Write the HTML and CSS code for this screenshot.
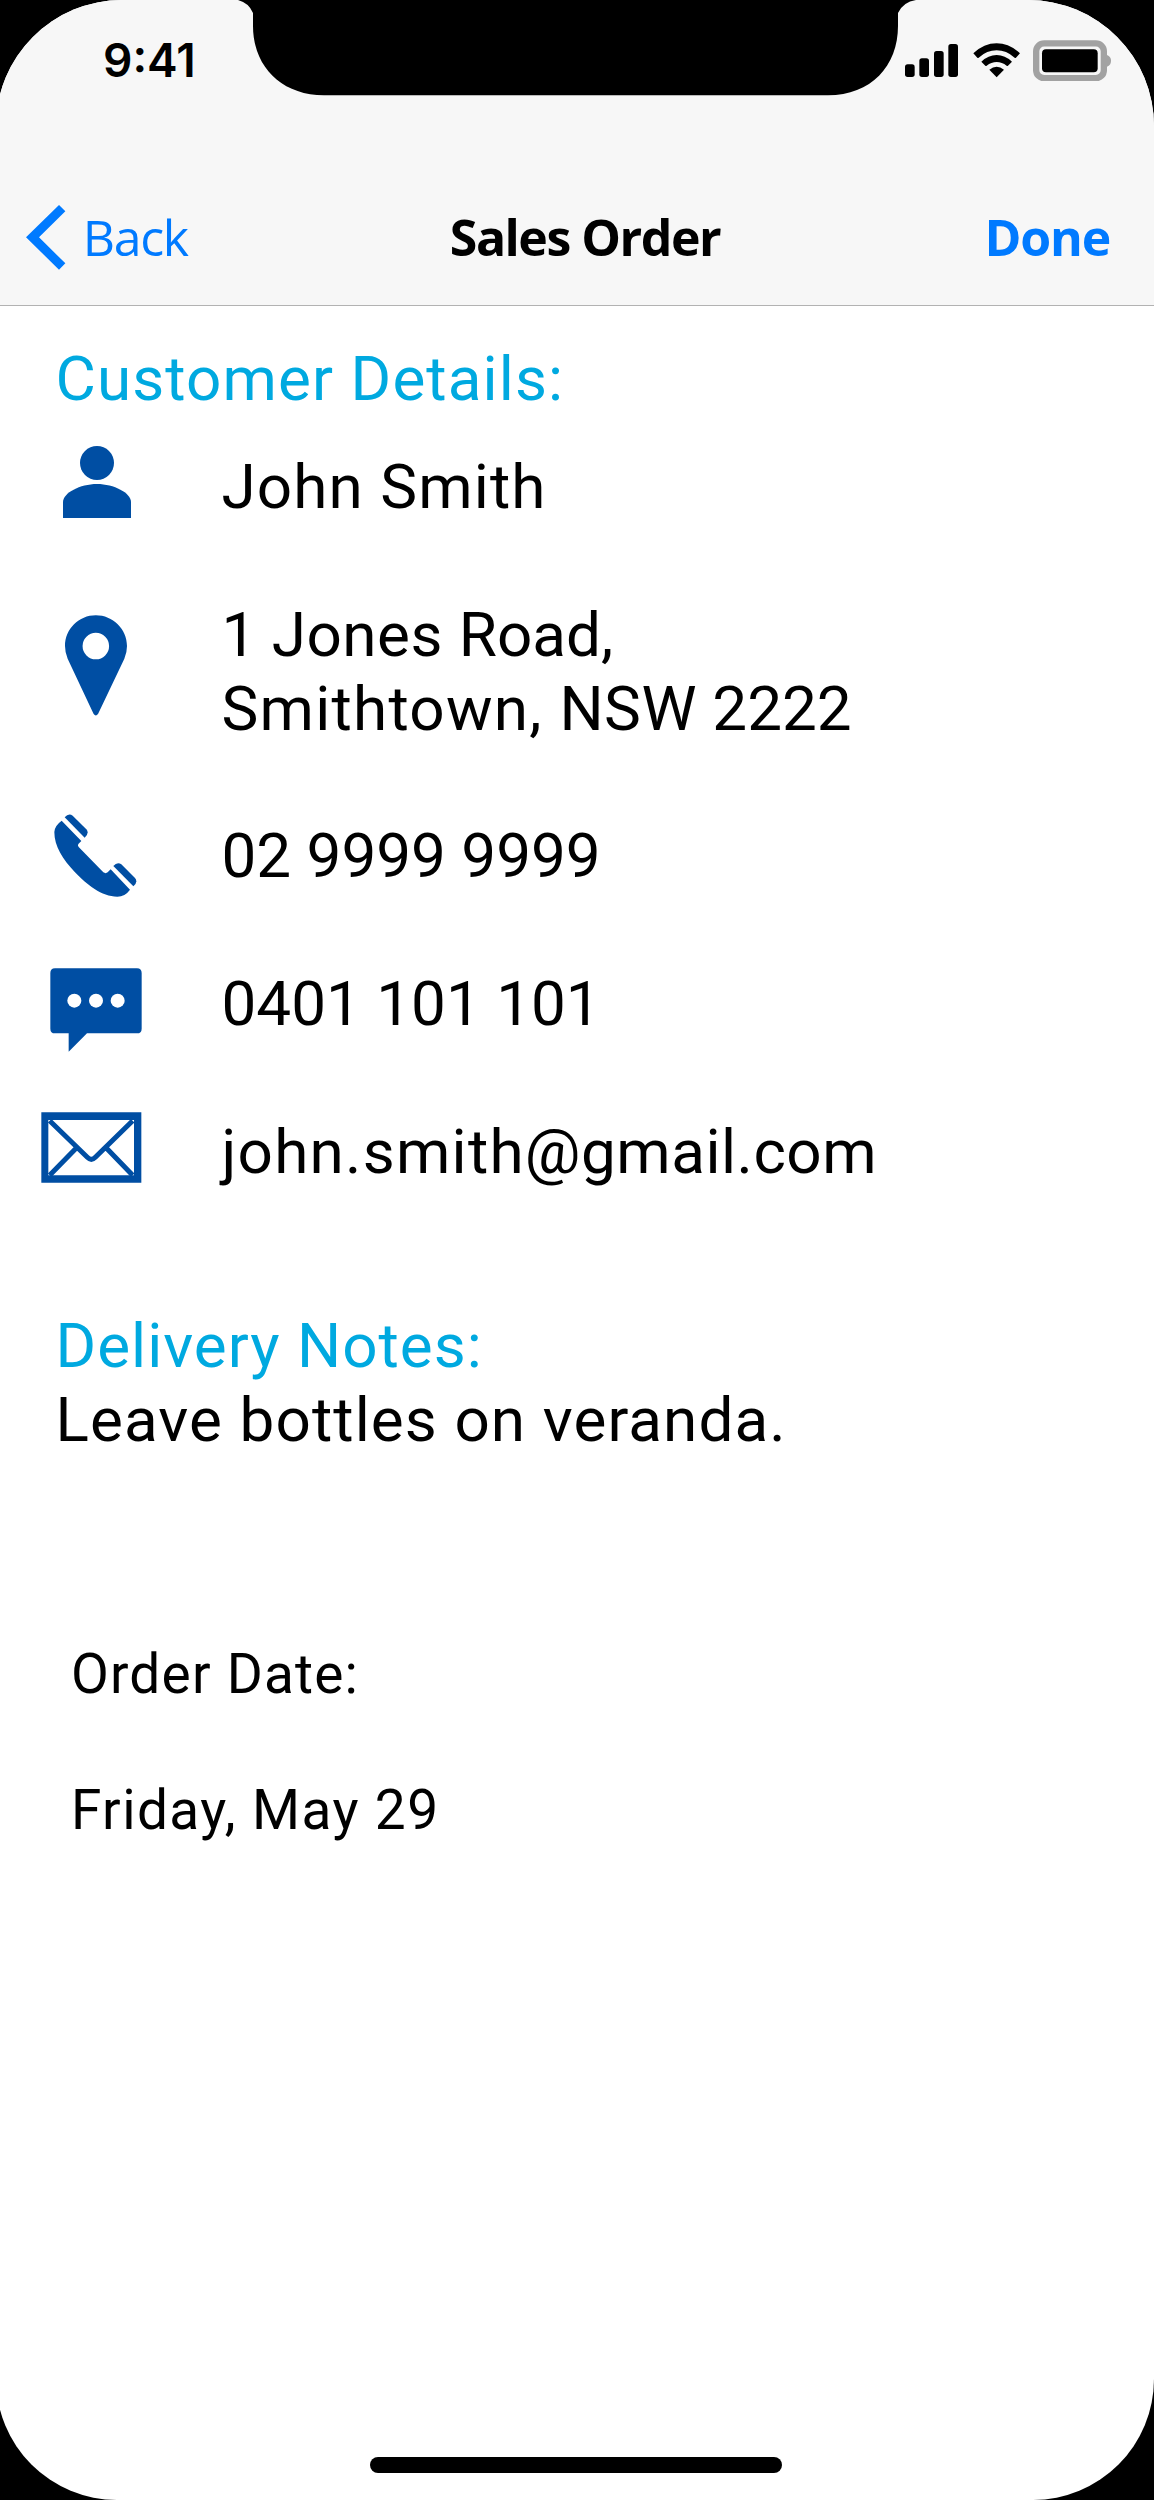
FILE: index.html
```html
<!DOCTYPE html>
<html lang="en">
<head>
<meta charset="utf-8">
<title>Sales Order</title>
<link rel="stylesheet" href="styles.css">
</head>
<body>
<div class="screen">
  <header class="header">
    <div class="status-bar">
      <span class="time">9:41</span>
      <div class="status-icons">
        <svg class="signal" viewBox="0 0 159 99" aria-hidden="true">
          <rect x="0" y="61" width="29" height="38" rx="8"/>
          <rect x="43" y="43" width="29" height="56" rx="8"/>
          <rect x="87" y="21" width="29" height="78" rx="8"/>
          <rect x="130" y="0" width="29" height="99" rx="8"/>
        </svg>
        <svg class="wifi" viewBox="657 128 142 104" aria-hidden="true">
          <path d="M658 159Q690 129 728 129Q766 129 798 159L786 172Q784 174 782 172Q757 150 728 150Q699 150 674 172Q672 174 670 172Z"/>
          <path d="M682 184Q703 164 728 164Q753 164 774 184L762 196Q760 198 758 196Q744 185 728 185Q712 185 698 196Q696 198 694 196Z"/>
          <path d="M706 208Q728 190 750 208L728 231Z"/>
        </svg>
        <svg class="battery" viewBox="836 119 236 125" aria-hidden="true">
          <rect x="845.5" y="129" width="203" height="104.500" rx="24" fill="none" stroke="#a2a2a2" stroke-width="19"/>
          <path d="M1058 164Q1070 169 1070 181Q1070 194 1058 199Z" fill="#a2a2a2"/>
          <rect x="863" y="147" width="167" height="69" rx="12"/>
        </svg>
      </div>
    </div>
    <nav class="nav-bar">
      <a class="back">
        <svg class="chevron" viewBox="80 614 119 195" aria-hidden="true"><path d="M179 614L198 633L119 711L198 789L179 808L80 711Z"/></svg>
        <span>Back</span>
      </a>
      <h1 class="title">Sales Order</h1>
      <a class="done">Done</a>
    </nav>
    <svg class="notch" viewBox="0 0 678 96" aria-hidden="true">
      <path d="M0 0Q11 3 15 13V26C15 66 43 95.300 86 95.300H590C633 95.300 660 66 660 26V13Q665 2 678 0Z" transform="translate(0 0)"/>
    </svg>
  </header>

  <main class="content">
    <section class="customer">
      <h2 class="heading wide">Customer Details:</h2>
      <ul class="details">
        <li class="detail">
          <span class="slot slot-person"><svg width="68" height="72" viewBox="0 0 68 72" aria-hidden="true"><circle cx="34" cy="17" r="17"/><path d="M0 72V56C0 47 17 38 34 38S68 47 68 56V72Z"/></svg></span>
          <span class="wide">John Smith</span>
        </li>
        <li class="detail">
          <span class="slot slot-pin"><svg width="62" height="101" viewBox="103 104 187 303" aria-hidden="true"><path fill-rule="evenodd" d="M196 104C247 104 290 145 290 197Q290 217 282 235L203 401Q196 411 189 401L111 235Q103 217 103 197C103 145 145 104 196 104ZM196 157A40 40 0 1 0 196 237A40 40 0 1 0 196 157Z"/></svg></span>
          <span>1 <span class="medium">Jones </span>Road,<br><span class="wider">Smithtown, </span><span class="medium">NSW</span> 2222</span>
        </li>
        <li class="detail">
          <span class="slot slot-phone"><svg width="83" height="83" viewBox="72 703 249 249" aria-hidden="true"><path d="M95 723L154 784L145 793Q142 798 146 802L220 878Q227 883 233 878L242 869L300 930Q285 951 262 951C215 951 170 915 135 878C98 838 73 800 73 757Q74 738 95 723Z"/><path d="M104 713Q116 699 128 708L169 749Q179 761 164 774Z"/><path d="M250 859Q262 845 274 854L315 895Q325 907 310 920Z"/></svg></span>
          <span>02 9999 9999</span>
        </li>
        <li class="detail">
          <span class="slot slot-chat"><svg width="92" height="84" viewBox="58 143 276 252" aria-hidden="true"><path d="M73 144H319Q333 144 333 158V325Q333 339 319 339H169L114 394V339H73Q59 339 59 325V158Q59 144 73 144Z"/><g fill="#fff"><circle cx="131" cy="241" r="21"/><circle cx="196" cy="241" r="21"/><circle cx="261" cy="241" r="21"/></g></svg></span>
          <span>0401 101 101</span>
        </li>
        <li class="detail">
          <span class="slot slot-mail"><svg width="101" height="71" viewBox="32 574 303 213" aria-hidden="true"><path fill-rule="evenodd" d="M33 575H333V786H33ZM54 598V764H311V598Z"/><path class="fold" d="M58 600L171 710Q183 722 195 710L307 600M58 764L138 682M307 764L228 682"/></svg></span>
          <span><span class="wider">john.smith</span><span class="medium">@gmail.com</span></span>
        </li>
      </ul>
    </section>

    <section class="notes">
      <h2 class="heading">Delivery Notes:</h2>
      <p>Leave bottles on veranda.</p>
    </section>

    <section class="order">
      <p>Order Date:</p>
      <p class="date">Friday, May 29</p>
    </section>
  </main>
  <div class="home-indicator"></div>
</div>
</body>
</html>
```
FILE: styles.css
```css
* { box-sizing: border-box; }
body { margin: 0; background: #000; overflow: hidden; color: #000; }
h1, h2, p, ul { margin: 0; padding: 0; font-weight: inherit; font-size: inherit; }
svg { display: block; flex: none; }

.screen {
  width: 1158px;
  height: 2500px;
  margin-left: -4px;
  padding-left: 4px;
  overflow: hidden;
  display: flex;
  flex-direction: column;
  background: #fff;
  border-radius: 126px 126px 121px 121px;
}

.header {
  position: relative;
  height: 306px;
  flex: none;
  margin-left: -4px;
  padding-left: 4px;
  display: flex;
  flex-direction: column;
  justify-content: space-between;
  background: #f7f7f7;
  border-bottom: 1px solid #b2b2b2;
}
.notch { position: absolute; top: 0; left: 242px; width: 678px; height: 96px; }

.status-bar {
  height: 120px;
  padding: 0 42.500px 0 103px;
  display: flex;
  justify-content: space-between;
  align-items: center;
}
.time { font: 600 46px/120px Inter, sans-serif; }
.status-icons { display: flex; align-items: center; padding-top: 1px; }
.signal { width: 53px; height: 33px; margin-right: 15px; }
.wifi { width: 47.300px; height: 34.700px; margin-right: 12.300px; }
.battery { width: 78.700px; height: 41.700px; }

.nav-bar {
  height: 136px;
  padding: 0 44px 0 26px;
  display: grid;
  grid-template-columns: 1fr auto 1fr;
  align-items: center;
  font: 50px/68px "Open Sans", sans-serif;
}
.back { display: flex; align-items: center; gap: 17px; color: #007aff; letter-spacing: -1.300px; }
.chevron { width: 39.700px; height: 65px; fill: #007aff; }
.title { margin-left: 34px; font-weight: 700; letter-spacing: -1.500px; }
.done { justify-self: end; color: #007aff; font-weight: 700; letter-spacing: -1.200px; }

.content {
  flex: 1;
  padding: 36px 0 0 55.500px;
  font: 62px/73.900px Roboto, sans-serif;
}
.medium { letter-spacing: 0.500px; }
.wide { letter-spacing: 1.100px; }
.wider { letter-spacing: 1.250px; }
.heading { color: #00a9e0; }
.details {
  list-style: none;
  margin-top: 34px;
  display: flex;
  flex-direction: column;
  gap: 73.900px;
}
.detail { display: flex; align-items: flex-start; }
.slot { width: 166px; height: 73.900px; fill: #004ea3; }
.slot-person { padding-left: 7.500px; margin-top: -4px; height: 68px; }
.slot-pin { padding: 17px 0 0 9px; }
.slot-phone { margin: -5px 0 0 -1.500px; width: 167.500px; }
.slot-chat { margin: 0 0 0 -6px; width: 172px; padding-top: 0.600px; }
.slot-mail { margin: -3.500px 0 0 -14.500px; width: 180.500px; }
.fold { fill: none; stroke: #004ea3; stroke-width: 15; }

.notes { margin-top: 120px; letter-spacing: 1.100px; }
.notes .heading { letter-spacing: 1px; }

.order {
  margin: 184.400px 0 0 15.500px;
  font-size: 55px;
  line-height: 66px;
  display: flex;
  flex-direction: column;
  gap: 70px;
  letter-spacing: 1.200px;
}
.date { letter-spacing: 1.400px; }

.home-indicator {
  flex: none;
  align-self: center;
  width: 412px;
  height: 16px;
  margin: 0 3px 27px 0;
  border-radius: 8px;
  background: #000;
}
```
